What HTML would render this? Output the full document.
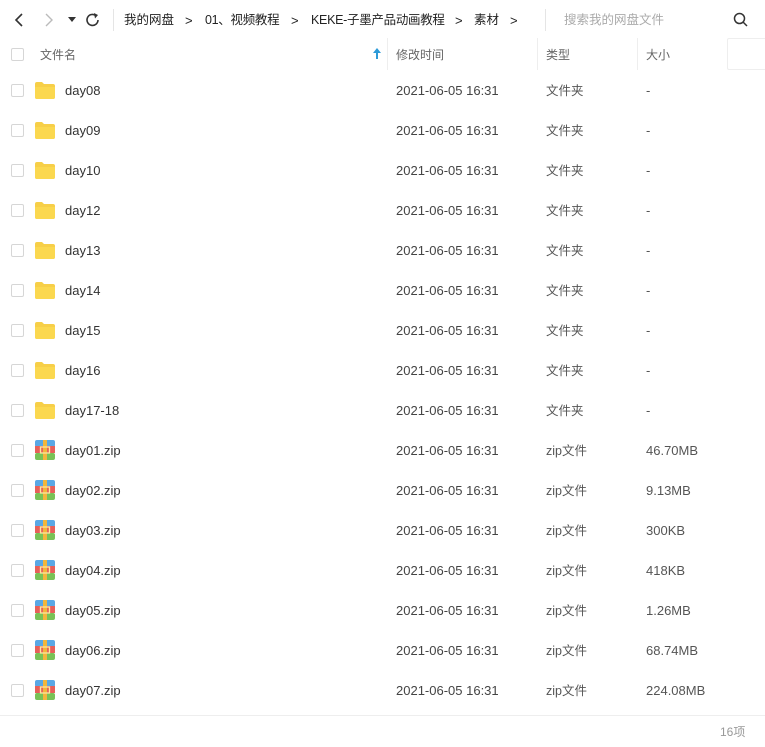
<!DOCTYPE html><html><head><meta charset="utf-8"><style>
*{margin:0;padding:0;box-sizing:border-box}
body{width:765px;height:747px;background:#fff;font-family:"Liberation Sans","Noto Sans CJK SC",sans-serif;position:relative;overflow:hidden;color:#333}
.a{position:absolute;white-space:nowrap;line-height:16px}
.t{font-size:12.5px;color:#222;top:12px}
.g{font-size:13px;color:#222;top:13px}
.h{font-size:12px;color:#666;top:47px}
.cb{position:absolute;left:11px;width:13px;height:13px;border:1px solid #d6d6d6;border-radius:2px;background:#fff}
.r{position:absolute;left:0;width:765px;height:40px;font-size:13px}
.r span{position:absolute;top:13px;white-space:nowrap;line-height:16px}
.nm{left:65px;color:#333}.dt{left:396px;color:#444}.r span.ty{left:546px;color:#555;font-size:12.5px;top:13px}.sz{left:646px;color:#555}
.fd{position:absolute;left:35px;top:12px;width:20px;height:17px}
.zp{position:absolute;left:35px;top:10px;width:20px;height:20px}
.sep{position:absolute;top:38px;width:1px;height:32px;background:#eee}
</style></head><body>
<svg class="a" style="left:12px;top:12px" width="14" height="16"><path d="M10 2 L4 8 L10 14" stroke="#333" stroke-width="1.6" fill="none"/></svg>
<svg class="a" style="left:42px;top:12px" width="14" height="16"><path d="M4 2 L10 8 L4 14" stroke="#bbb" stroke-width="1.4" fill="none"/></svg>
<svg class="a" style="left:68px;top:17px" width="8" height="6"><path d="M0 0 L8 0 L4 5Z" fill="#333"/></svg>
<svg class="a" style="left:85px;top:12px" width="16" height="16"><path d="M13 8 A5.5 5.5 0 1 1 10.5 3.3" stroke="#333" stroke-width="1.6" fill="none"/><path d="M9 1 L13 3 L10 6.5Z" fill="#333"/></svg>
<div class="a" style="left:113px;top:9px;width:1px;height:22px;background:#e5e5e5"></div>
<div class="a t" style="left:124px">我的网盘</div>
<div class="a g" style="left:185px">&gt;</div>
<div class="a t" style="left:205px;letter-spacing:-0.3px">01、视频教程</div>
<div class="a g" style="left:291px">&gt;</div>
<div class="a t" style="left:311px;letter-spacing:-0.3px">KEKE-子墨产品动画教程</div>
<div class="a g" style="left:455px">&gt;</div>
<div class="a t" style="left:474px">素材</div>
<div class="a g" style="left:510px">&gt;</div>
<div class="a" style="left:545px;top:9px;width:1px;height:22px;background:#e5e5e5"></div>
<div class="a t" style="left:564px;color:#aaa">搜索我的网盘文件</div>
<svg class="a" style="left:733px;top:12px" width="16" height="16"><circle cx="6.5" cy="6.5" r="5" stroke="#333" stroke-width="1.5" fill="none"/><path d="M10 10 L14 14" stroke="#333" stroke-width="1.5"/></svg>
<div class="cb" style="top:48px"></div>
<div class="a h" style="left:40px">文件名</div>
<svg class="a" style="left:373px;top:48px" width="8" height="11"><path d="M4 0 L8 5 L5 5 L5 11 L3 11 L3 5 L0 5Z" fill="#2c9ad8"/></svg>
<div class="sep" style="left:387px"></div><div class="sep" style="left:537px"></div><div class="sep" style="left:637px"></div>
<div class="a" style="left:727px;top:38px;width:40px;height:32px;border:1px solid #eee;border-right:none;border-radius:2px"></div>
<div class="a h" style="left:396px">修改时间</div>
<div class="a h" style="left:546px">类型</div>
<div class="a h" style="left:646px">大小</div>
<div id="rows"></div>
<div class="a" style="left:0;top:715px;width:765px;height:1px;background:#eee"></div>
<div class="a" style="left:720px;top:724px;font-size:12px;color:#999">16项</div>
<script>
var f=["day08","day09","day10","day12","day13","day14","day15","day16","day17-18"];
var z=[["day01.zip","46.70MB"],["day02.zip","9.13MB"],["day03.zip","300KB"],["day04.zip","418KB"],["day05.zip","1.26MB"],["day06.zip","68.74MB"],["day07.zip","224.08MB"]];
var h="",y=70;
var fold='<svg class="fd" viewBox="0 0 20 17"><path d="M0 2 Q0 0 2 0 L7 0 L9 2 L18 2 Q20 2 20 4 L20 15 Q20 17 18 17 L2 17 Q0 17 0 15Z" fill="#f7cf48"/><path d="M0 5 L20 5 L20 15 Q20 17 18 17 L2 17 Q0 17 0 15Z" fill="#fbd84f"/></svg>';
var zip='<svg class="zp" viewBox="0 0 20 20"><rect width="20" height="7" rx="2" fill="#5aa8e6"/><rect y="6" width="20" height="7" fill="#e8605a"/><rect y="13" width="20" height="7" rx="2" fill="#78c257"/><rect x="8" y="0" width="4" height="20" fill="#f2b63c"/><rect x="5.5" y="7" width="9" height="6" fill="none" stroke="#fbe6a0" stroke-width="1.3"/></svg>';
f.forEach(function(n){h+='<div class="r" style="top:'+y+'px"><div class="cb" style="top:14px"></div>'+fold+'<span class="nm">'+n+'</span><span class="dt">2021-06-05 16:31</span><span class="ty">文件夹</span><span class="sz">-</span></div>';y+=40;});
z.forEach(function(n){h+='<div class="r" style="top:'+y+'px"><div class="cb" style="top:14px"></div>'+zip+'<span class="nm">'+n[0]+'</span><span class="dt">2021-06-05 16:31</span><span class="ty">zip文件</span><span class="sz">'+n[1]+'</span></div>';y+=40;});
document.getElementById("rows").innerHTML=h;
</script>
</body></html>
